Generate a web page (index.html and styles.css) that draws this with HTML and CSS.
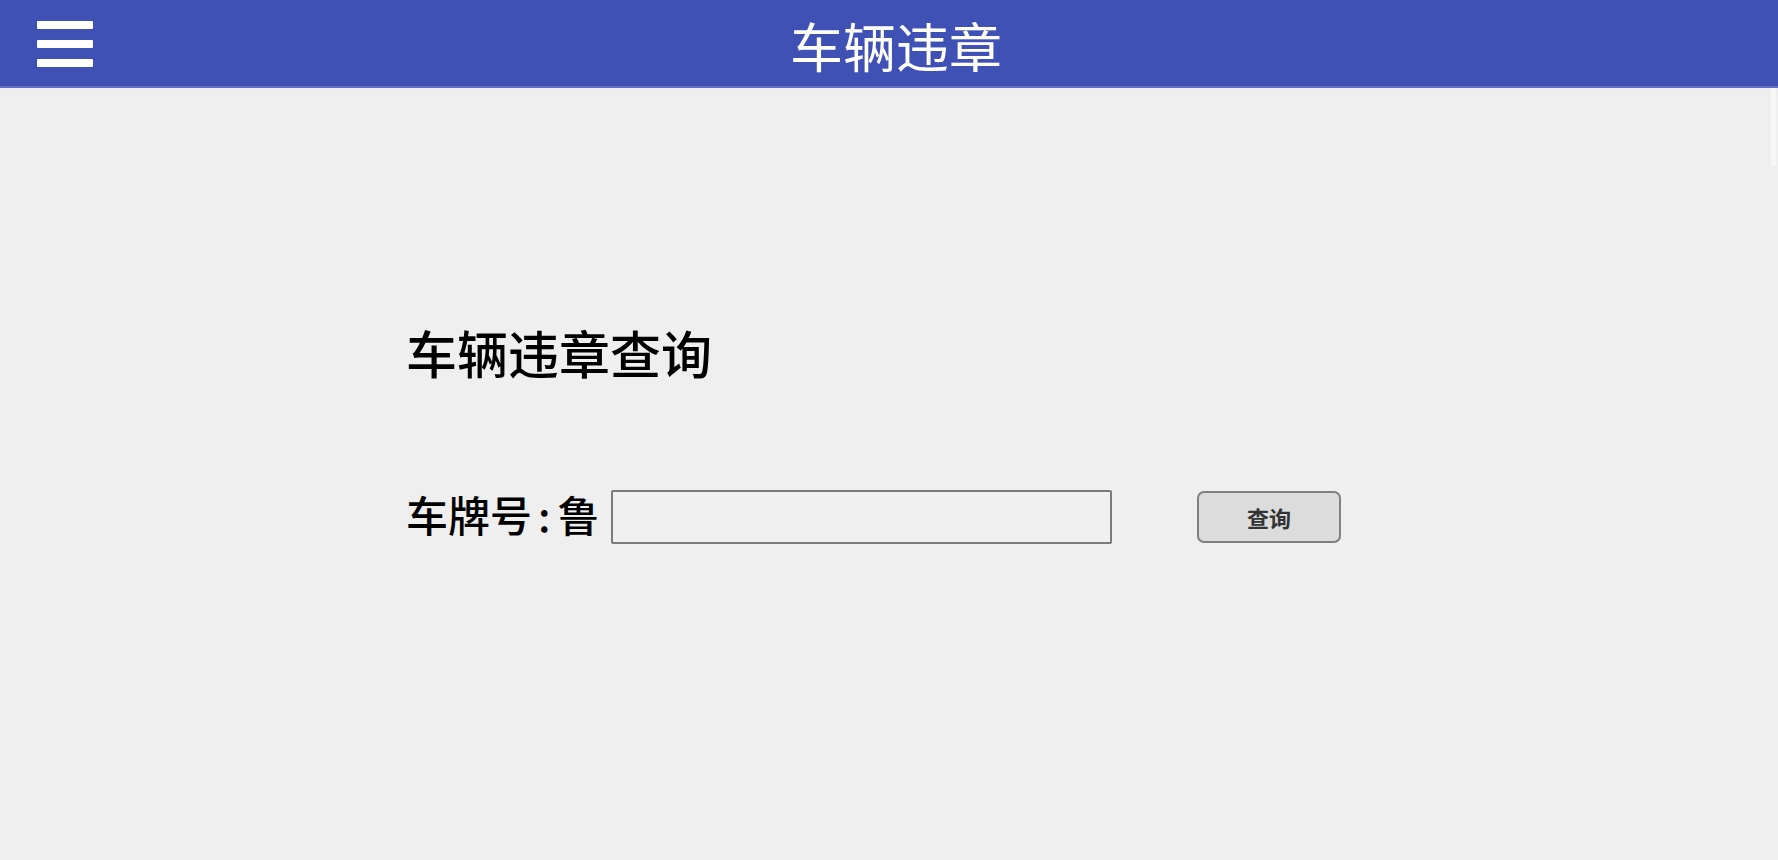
FILE: index.html
```html
<!DOCTYPE html>
<html lang="zh-CN">
<head>
<meta charset="utf-8">
<title>车辆违章</title>
<link rel="stylesheet" href="styles.css">
</head>
<body>
<header class="topbar">
  <div class="menu-btn" aria-label="menu">
    <span class="bar"></span><span class="bar"></span><span class="bar"></span>
  </div>
  <h1 class="topbar-title">车辆违章</h1>
</header>
<main class="content">
  <h2 class="heading">车辆违章查询</h2>
  <form class="query-row">
    <label class="plate-label">车牌号<span class="colon">:</span>鲁</label>
    <input class="plate-input" type="text">
    <button class="query-btn" type="button">查询</button>
  </form>
</main>
<div class="scroll-hint"></div>
</body>
</html>
```
FILE: styles.css
```css
html, body {
  margin: 0;
  padding: 0;
  height: 100%;
}
body {
  background: #efefef;
  font-family: "Noto Sans CJK SC", "Noto Sans", sans-serif;
  overflow: hidden;
  position: relative;
}
.topbar {
  height: 86px;
  background: #3f51b5;
  border-bottom: 2px solid #6272c6;
  position: relative;
  display: flex;
  align-items: center;
  justify-content: center;
}
.menu-btn {
  position: absolute;
  left: 37px;
  top: 21px;
  width: 56px;
  height: 46px;
  display: flex;
  flex-direction: column;
  justify-content: space-between;
}
.bar {
  display: block;
  height: 8px;
  background: #ffffff;
  border-radius: 1px;
}
.topbar-title {
  margin: 0;
  color: #ffffff;
  font-size: 53px;
  font-weight: 400;
  line-height: 1;
  padding-left: 14px;
  margin-top: 4px;
}
.content {
  width: 966px;
  margin: 0 auto;
  padding-top: 234px;
}
.heading {
  margin: 0;
  font-size: 51px;
  line-height: 60px;
  font-weight: 500;
  color: #000;
}
.query-row {
  margin: 101px 0 0 0;
  display: flex;
  align-items: center;
}
.plate-label {
  font-size: 42px;
  font-weight: 500;
  color: #000;
  width: 205px;
  white-space: nowrap;
  padding-bottom: 6px;
}
.colon {
  display: inline-block;
  padding: 0 7px 0 6px;
}
.plate-input {
  box-sizing: border-box;
  width: 501px;
  height: 54px;
  border: 2px solid #7a7a7a;
  border-radius: 2px;
  background: #f0f0f0;
  margin: 0;
}
.query-btn {
  box-sizing: border-box;
  margin-left: 85px;
  width: 144px;
  height: 52px;
  background: #dcdcdc;
  border: 2px solid #808080;
  border-radius: 7px;
  font-family: "Noto Sans CJK SC", sans-serif;
  font-size: 22px;
  font-weight: 700;
  color: #333;
  padding: 0;
}
.scroll-hint {
  position: absolute;
  right: 2px;
  top: 88px;
  width: 6px;
  height: 78px;
  background: #f6f6f6;
  border-left: 1px solid #e8e8e8;
}
```
